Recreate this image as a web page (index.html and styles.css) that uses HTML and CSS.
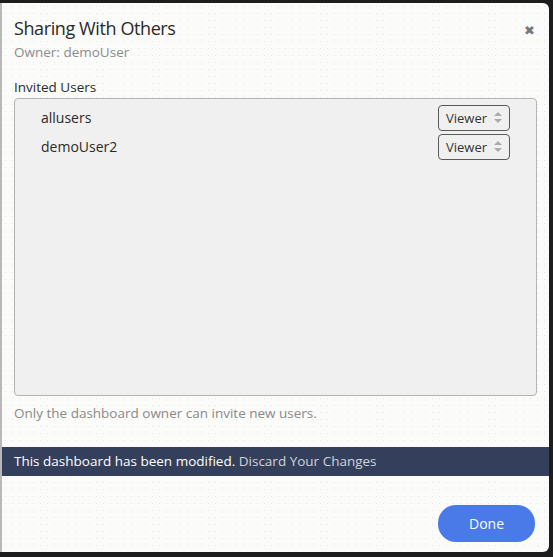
FILE: index.html
```html
<!DOCTYPE html>
<html lang="en">
<head>
  <meta charset="UTF-8">
  <title>Sharing With Others</title>
  <link rel="stylesheet" href="styles.css">
</head>
<body>
  <div class="modal">
    <div class="modal-header">
      <div>
        <h1>Sharing With Others</h1>
        <div class="owner">Owner: demoUser</div>
      </div>
      <span class="close">&#10006;</span>
    </div>

    <div class="modal-body">
      <div class="label">Invited Users</div>
      <div class="user-list">
        <div class="user-row">
          <span class="user-name">allusers</span>
          <div class="role-select">Viewer
            <svg class="arrows" width="8" height="11" viewBox="0 0 8 11"><path d="M4 0L8 4H0Z M4 11L8 7H0Z" fill="#aaa"/></svg>
          </div>
        </div>
        <div class="user-row">
          <span class="user-name">demoUser2</span>
          <div class="role-select">Viewer
            <svg class="arrows" width="8" height="11" viewBox="0 0 8 11"><path d="M4 0L8 4H0Z M4 11L8 7H0Z" fill="#aaa"/></svg>
          </div>
        </div>
      </div>
      <p class="note">Only the dashboard owner can invite new users.</p>
    </div>

    <div class="banner">
      This dashboard has been modified. <a href="#" class="discard">Discard Your Changes</a>
    </div>

    <div class="modal-footer">
      <button class="done">Done</button>
    </div>
  </div>
</body>
</html>
```

FILE: styles.css
```css
body {
  margin: 0;
  padding: 3px 4px 3px 0;
  background: #1d1d1d;
  font-family: 'Open Sans', 'Noto Sans', sans-serif;
  color: #2b2b2b;
}

.modal {
  width: 547px;
  height: 549px;
  background-color: #fbfbf9;
  background-image: radial-gradient(#e6e6e2 0.6px, transparent 0.8px);
  background-size: 7px 7px;
  border-left: 2px solid #b8b8b8;
  border-radius: 0 6px 6px 0;
  display: flex;
  flex-direction: column;
}

.modal-header {
  display: flex;
  justify-content: space-between;
  padding: 12px 14px 0 12px;
}

h1 {
  margin: 0;
  font-size: 18px;
  font-weight: 400;
  letter-spacing: -0.4px;
  color: #2a2a2a;
  line-height: 26px;
}

.owner {
  font-size: 13.5px;
  color: #8c8c8c;
  margin-top: 2px;
}

.close {
  font-size: 13px;
  color: #777;
  margin-top: 6px;
}

.modal-body {
  padding: 17px 12px 0 12px;
}

.label {
  font-size: 13.5px;
  color: #2a2a2a;
  margin-bottom: 2px;
}

.user-list {
  height: 292px;
  background: #f0f0f0;
  border: 1px solid #b4b4b4;
  border-radius: 4px;
  padding: 4px 26px 0 26px;
}

.user-row {
  display: flex;
  justify-content: space-between;
  align-items: center;
  height: 29px;
}

.user-name {
  font-size: 14px;
  color: #2a2a2a;
}

.role-select {
  width: 72px;
  height: 26px;
  box-sizing: border-box;
  border: 1px solid #5a5a5a;
  border-radius: 4px;
  font-size: 13px;
  color: #333;
  padding-left: 7px;
  display: flex;
  align-items: center;
  gap: 7px;
}

.note {
  margin: 8px 0 0;
  font-size: 13.5px;
  color: #8a8a8a;
}

.banner {
  margin-top: 25px;
  background: #343f5b;
  color: #fff;
  font-size: 13.5px;
  padding: 5px 12px;
  height: 19px;
}

.discard {
  color: #d0d3dc;
  text-decoration: none;
}

.modal-footer {
  display: flex;
  justify-content: flex-end;
  padding: 29px 14px 0;
}

.done {
  width: 97px;
  height: 37px;
  border: none;
  border-radius: 18px;
  background: #4a7ae7;
  color: #fff;
  font-family: inherit;
  font-size: 14px;
}
```
